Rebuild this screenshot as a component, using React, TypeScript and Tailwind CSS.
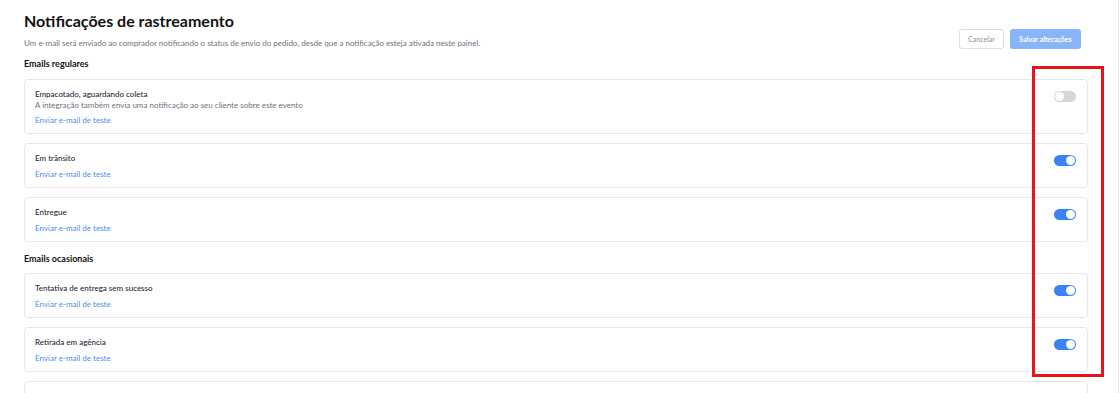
import { useState } from 'react';

type Notice = {
  id: string;
  title: string;
  description?: string;
  enabled: boolean;
};

const regular: Notice[] = [
  {
    id: 'packed',
    title: 'Empacotado, aguardando coleta',
    description: 'A integração também envia uma notificação ao seu cliente sobre este evento',
    enabled: false,
  },
  { id: 'transit', title: 'Em trânsito', enabled: true },
  { id: 'delivered', title: 'Entregue', enabled: true },
];

const occasional: Notice[] = [
  { id: 'failed', title: 'Tentativa de entrega sem sucesso', enabled: true },
  { id: 'pickup', title: 'Retirada em agência', enabled: true },
  { id: 'returned', title: 'Devolvido ao remetente', enabled: true },
];

function Toggle({ on, onChange }: { on: boolean; onChange: () => void }) {
  return (
    <button
      type="button"
      onClick={onChange}
      className={`relative mt-[2px] h-[11px] w-[22px] shrink-0 rounded-full ${on ? 'bg-[#3b82f6]' : 'bg-[#d4d6dc]'}`}
    >
      <span
        className={`absolute top-[1px] h-[9px] w-[9px] rounded-full bg-white ${on ? 'right-[1px]' : 'left-[1px]'}`}
      />
    </button>
  );
}

function NoticeCard({ notice, onToggle }: { notice: Notice; onToggle: () => void }) {
  return (
    <div className="flex items-start justify-between rounded-[4px] border border-[#e5e7eb] bg-white pt-[9px] pb-[7px] pl-[10px] pr-[11px]">
      <div className="flex flex-col">
        <span className="text-[8px] leading-[11px] font-medium text-[#1f2937]">{notice.title}</span>
        {notice.description && (
          <span className="text-[8px] leading-[11px] text-[#6b7280]">{notice.description}</span>
        )}
        <a className={`${notice.description ? 'mt-[4px]' : 'mt-[5px]'} text-[8px] leading-[11px] text-[#4b8bf5]`} href="#">
          Enviar e-mail de teste
        </a>
      </div>
      <Toggle on={notice.enabled} onChange={onToggle} />
    </div>
  );
}

export default function App() {
  const [state, setState] = useState<Record<string, boolean>>(() =>
    Object.fromEntries([...regular, ...occasional].map((n) => [n.id, n.enabled]))
  );

  const flip = (id: string) => setState((s) => ({ ...s, [id]: !s[id] }));

  return (
    <div className="relative min-h-screen w-[1120px] bg-white" style={{ fontFamily: 'Lato, "Noto Sans", sans-serif' }}>
      <div className="w-[1119px] border-r border-[#e5e7eb] pt-[10px] pb-6 pl-6 pr-[30px]">
        {/* Header */}
        <div className="flex items-end justify-between">
          <div>
            <h1 className="text-[16px] leading-[22px] font-bold text-[#111111]">Notificações de rastreamento</h1>
            <p className="mt-[6px] text-[8px] leading-[11px] text-[#6b7280]">
              Um e-mail será enviado ao comprador notificando o status de envio do pedido, desde que a notificação esteja ativada neste painel.
            </p>
          </div>
          <div className="mr-[7px] flex gap-[6px]">
            <button className="h-[20px] w-[45px] rounded-[3px] border border-[#dcdfe4] bg-white text-[7px] text-[#8a8f98]">
              Cancelar
            </button>
            <button className="h-[20px] w-[71px] rounded-[3px] bg-[#8ab4f8] text-[7px] font-bold text-white">
              Salvar alterações
            </button>
          </div>
        </div>

        {/* Emails regulares */}
        <h2 className="mt-[9px] text-[9px] leading-[11px] font-bold text-[#111111]">Emails regulares</h2>
        <div className="mt-[10px] flex flex-col gap-[9px]">
          {regular.map((n) => (
            <NoticeCard key={n.id} notice={{ ...n, enabled: state[n.id] }} onToggle={() => flip(n.id)} />
          ))}
        </div>

        {/* Emails ocasionais */}
        <h2 className="mt-[11px] text-[9px] leading-[11px] font-bold text-[#111111]">Emails ocasionais</h2>
        <div className="mt-[9px] flex flex-col gap-[9px]">
          {occasional.map((n) => (
            <NoticeCard key={n.id} notice={{ ...n, enabled: state[n.id] }} onToggle={() => flip(n.id)} />
          ))}
        </div>
      </div>

      {/* annotation highlight */}
      <div className="pointer-events-none absolute left-[1032px] top-[66px] h-[311px] w-[72px] border-[3px] border-[#e8141c]" />
    </div>
  );
}
